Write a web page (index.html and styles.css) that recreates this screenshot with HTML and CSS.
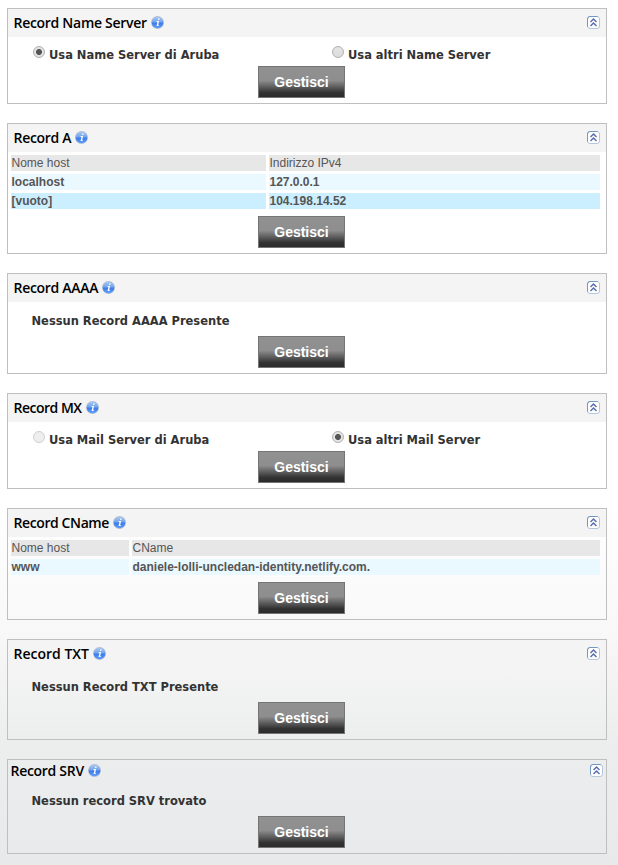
FILE: index.html
```
<!DOCTYPE html>
<html lang="it">
<head>
<meta charset="utf-8">
<title>Gestione DNS</title>
<link rel="stylesheet" href="styles.css">
</head>
<body>
<svg class="defs" width="0" height="0">
  <defs>
    <linearGradient id="blue" x1="0" y1="0" x2="0" y2="1">
      <stop offset="0" stop-color="#a9c9f3"/><stop offset=".45" stop-color="#72a5ec"/><stop offset=".55" stop-color="#3f7ae8"/><stop offset="1" stop-color="#5ba0ff"/>
    </linearGradient>
    <symbol id="info" viewBox="0 0 13 13">
      <circle cx="6.5" cy="6.5" r="6.5" fill="#b3bfd2"/>
      <circle cx="6.5" cy="6.5" r="5.8" fill="url(#blue)"/>
      <path d="M7.3 2.6h1.3l-.3 1.4H7zM5.7 5.1h2.4L7.2 9h.6l-.2.9H5.5l1-3.9h-.9z" fill="#fff"/>
    </symbol>
    <symbol id="up" viewBox="0 0 13 13">
      <rect x=".5" y=".5" width="12" height="12" rx="2.5" fill="#fff" stroke="#b4c7db"/>
      <path d="M.5 10.5V3Q.5.5 3 .5h7.5" fill="none" stroke="#7397bd"/>
      <path d="M3.5 6L6.5 3l3 3M3.5 10l3-3 3 3" fill="none" stroke="#5a6fae" stroke-width="1.5"/>
    </symbol>
  </defs>
</svg>
<main class="records">
  <section class="card">
    <header class="head"><h2>Record Name Server</h2><svg class="info"><use href="#info"/></svg><svg class="up"><use href="#up"/></svg></header>
    <div class="choices">
      <label><span class="radio on"></span><span>Usa Name Server di Aruba</span></label>
      <label><span class="radio"></span><span>Usa altri Name Server</span></label>
    </div>
    <button class="manage">Gestisci</button>
  </section>
  <section class="card">
    <header class="head"><h2>Record A</h2><svg class="info"><use href="#info"/></svg><svg class="up"><use href="#up"/></svg></header>
    <div class="table hosts">
      <div class="th">Nome host</div><div class="th">Indirizzo IPv4</div>
      <div class="td">localhost</div><div class="td">127.0.0.1</div>
      <div class="td alt">[vuoto]</div><div class="td alt">104.198.14.52</div>
    </div>
    <button class="manage">Gestisci</button>
  </section>
  <section class="card">
    <header class="head"><h2>Record AAAA</h2><svg class="info"><use href="#info"/></svg><svg class="up"><use href="#up"/></svg></header>
    <p class="empty">Nessun Record AAAA Presente</p>
    <button class="manage">Gestisci</button>
  </section>
  <section class="card">
    <header class="head"><h2 class="tight">Record MX</h2><svg class="info"><use href="#info"/></svg><svg class="up"><use href="#up"/></svg></header>
    <div class="choices">
      <label><span class="radio off"></span><span>Usa Mail Server di Aruba</span></label>
      <label><span class="radio on"></span><span>Usa altri Mail Server</span></label>
    </div>
    <button class="manage">Gestisci</button>
  </section>
  <section class="card">
    <header class="head"><h2 class="snug">Record CName</h2><svg class="info"><use href="#info"/></svg><svg class="up"><use href="#up"/></svg></header>
    <div class="table cname">
      <div class="th">Nome host</div><div class="th">CName</div>
      <div class="td">www</div><div class="td">daniele-lolli-uncledan-identity.netlify.com.</div>
    </div>
    <button class="manage">Gestisci</button>
  </section>
  <section class="card">
    <header class="head"><h2 class="normal">Record TXT</h2><svg class="info"><use href="#info"/></svg><svg class="up"><use href="#up"/></svg></header>
    <p class="empty">Nessun Record TXT Presente</p>
    <button class="manage">Gestisci</button>
  </section>
  <section class="card compact">
    <header class="head"><h2>Record SRV</h2><svg class="info"><use href="#info"/></svg><svg class="up"><use href="#up"/></svg></header>
    <p class="empty">Nessun record SRV trovato</p>
    <button class="manage">Gestisci</button>
  </section>
</main>
</body>
</html>
```
FILE: styles.css
```
* { box-sizing: border-box; }
body {
  margin: 0;
  min-height: 865px;
  background: linear-gradient(#fff 500px, #f8f8f8 635px, #f3f3f3 680px, #eceeee 740px, #e8e9eb 865px);
  font-family: "Liberation Sans", sans-serif;
}
.defs { position: absolute; }
.records { display: flex; flex-direction: column; gap: 19px; padding: 8px 11px 11px 7px; }
.card { width: 600px; border: 1px solid #bfbfbf; padding-bottom: 5px; }
.head { display: flex; align-items: center; height: 28px; padding: 0 6px 0 5.5px; background: #f4f4f4; }
h2 { margin: 0; font: 600 14px/28px "Open Sans", sans-serif; letter-spacing: -.29px; color: #000; white-space: nowrap; }
h2.tight { letter-spacing: -.5px; }
h2.snug { letter-spacing: -.4px; }
h2.normal { letter-spacing: 0; }
.info, .up { width: 13px; height: 13px; margin-bottom: 2px; }
.info { margin-left: 4px; }
.up { margin-left: auto; }
.choices { display: grid; grid-template-columns: 299px 1fr; height: 29px; padding-left: 25px; }
.choices label { display: flex; gap: 4px; padding-top: 9px; }
.choices label, .empty { font: bold 12.75px/18px "DejaVu Sans Condensed", "Noto Sans", sans-serif; color: #333; white-space: nowrap; }
.radio { width: 12px; height: 12px; border: 1px solid #b0b0b0; border-radius: 50%; background: linear-gradient(#e4e4e4, #dcdcdc); }
.radio.on { background: radial-gradient(circle, #555 0 2.6px, #e4e4e4 3.4px); }
.radio.off { border-color: #d0d0d0; background: #eee; }
.empty { margin: 0; height: 34px; padding: 10px 0 0 23.5px; }
.table { display: grid; grid-auto-rows: 16px; gap: 3px; padding: 3px 6px 7px 3px; font-size: 12px; line-height: 16px; color: #555; }
.hosts { grid-template-columns: 255px 1fr; }
.cname { grid-template-columns: 118px 1fr; }
.th { background: #e7e7e7; padding-left: .5px; }
.td { background: #eaf8ff; padding-left: .5px; font-weight: bold; }
.td.alt { background: #ccefff; }
.manage {
  display: block; width: 87px; height: 32px; margin: 0 0 0 250px; padding: 0;
  border: 1px solid #757575;
  background: linear-gradient(#919191 0, #8e8e8e 45%, #333 85%, #2b2b2b);
  font: bold 14px/30px "Liberation Sans", sans-serif; color: #fff;
}
.compact .head { height: 22px; padding: 0 3px 0 2.5px; background: none; }
.compact h2 { line-height: 22px; }
```
